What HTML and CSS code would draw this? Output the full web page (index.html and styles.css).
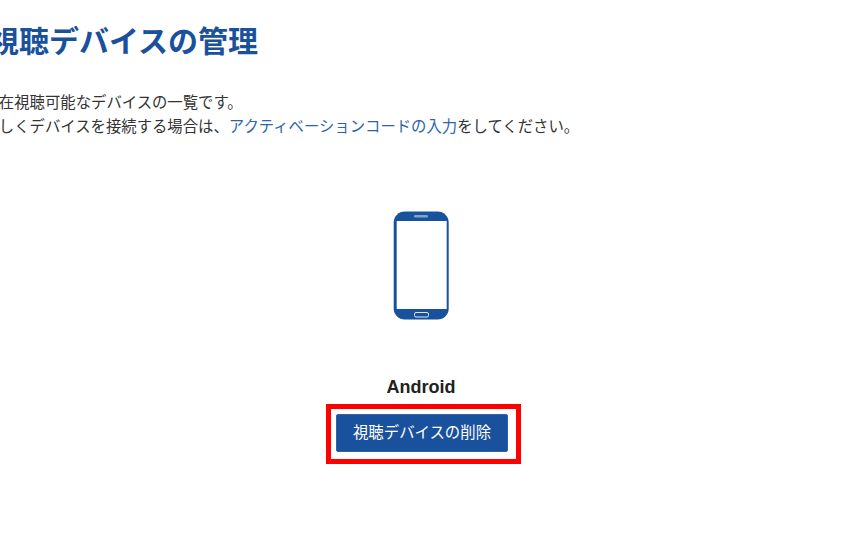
FILE: index.html
```html
<!DOCTYPE html>
<html lang="ja">
<head>
<meta charset="utf-8">
<title>視聴デバイスの管理</title>
<link rel="stylesheet" href="styles.css">
</head>
<body>
<main class="page">
  <h1 class="title">視聴デバイスの管理</h1>
  <p class="lead">現在視聴可能なデバイスの一覧です。<br>新しくデバイスを接続する場合は、<a class="link" href="#">アクティベーションコードの入力</a>をしてください。</p>
  <section class="device">
    <svg class="phone" width="58" height="110" viewBox="0 0 58 110" aria-hidden="true">
      <rect x="1.7" y="0.5" width="55" height="108" rx="11" fill="#19529c"/>
      <rect x="4.7" y="10" width="50" height="88" fill="#fff"/>
      <rect x="22" y="4" width="14" height="2.6" rx="1.3" fill="#7fa3cf"/>
      <rect x="22.5" y="101.5" width="14" height="4.5" rx="1.5" fill="#19529c" stroke="#dbe5f1" stroke-width="1"/>
    </svg>
    <div class="name">Android</div>
    <div class="highlight"><button class="btn" type="button">視聴デバイスの削除</button></div>
  </section>
</main>
</body>
</html>
```
FILE: styles.css
```css
html, body {
  margin: 0;
  padding: 0;
  background: #fff;
  overflow: hidden;
}
body {
  width: 850px;
  height: 550px;
  font-family: "Liberation Sans", "Noto Sans CJK JP", sans-serif;
  color: #333;
}
.page {
  width: 872px;
  margin-left: -15px;
  padding-top: 23px;
}
.title {
  margin: 0 0 0 4px;
  font-size: 30px;
  line-height: 38px;
  font-weight: 700;
  color: #19519c;
  white-space: nowrap;
}
.lead {
  margin: 30px 0 0 -1.5px;
  font-size: 15.36px;
  line-height: 24px;
  white-space: nowrap;
}
.link {
  color: #2b66ad;
  text-decoration: none;
}
.device {
  display: flex;
  flex-direction: column;
  align-items: center;
  margin-top: 72px;
}
.phone {
  display: block;
}
.name {
  margin-top: 55px;
  font-size: 18px;
  line-height: 22px;
  font-weight: 700;
  color: #222;
}
.highlight {
  margin: 6px 0 0 5px;
  padding: 5px 8px 7px 5px;
  border: 5px solid #f00;
}
.btn {
  display: block;
  width: 172px;
  height: 38px;
  padding: 0;
  border: 1px solid #2d63a8;
  border-radius: 2px;
  background: #19519c;
  color: #fff;
  font: 400 15.4px/1 "Liberation Sans", "Noto Sans CJK JP", sans-serif;
}
```
